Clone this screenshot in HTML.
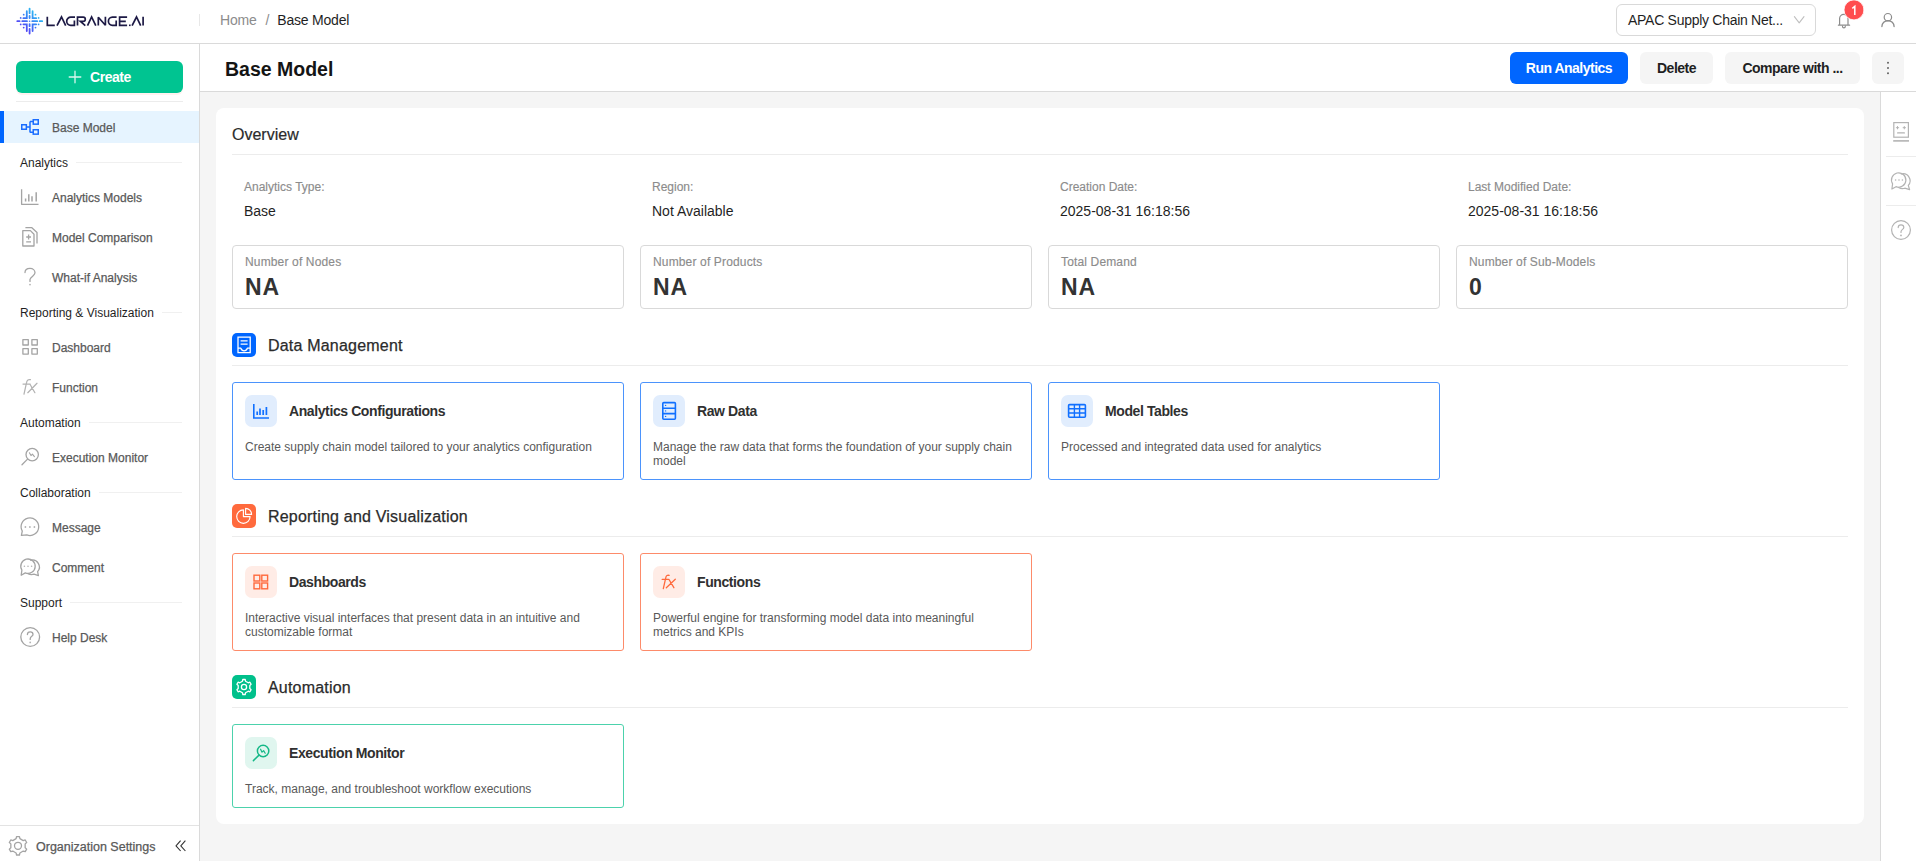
<!DOCTYPE html>
<html>
<head>
<meta charset="utf-8">
<style>
*{box-sizing:border-box;margin:0;padding:0}
html,body{width:1916px;height:861px;overflow:hidden;background:#f5f5f5;font-family:"Liberation Sans",sans-serif;color:#1f1f1f}
.abs{position:absolute}
/* top header */
#top{position:absolute;left:0;top:0;width:1916px;height:44px;background:#fff;border-bottom:1px solid #dadada}
#logo{position:absolute;left:16px;top:7px}
#vdiv{position:absolute;left:199px;top:14px;width:1px;height:12px;background:#e8e8e8}
#crumb{position:absolute;left:220px;top:12px;font-size:14px;line-height:16px;white-space:nowrap;letter-spacing:-0.2px}
#crumb .h{color:#8c8c8c}
#crumb .s{color:#8c8c8c;margin:0 8px 0 9px}
#crumb .c{color:#1f1f1f}
#sel{position:absolute;left:1616px;top:4px;width:200px;height:32px;border:1px solid #d9d9d9;border-radius:6px;background:#fff}
#sel span{position:absolute;left:11px;top:7px;font-size:14px;line-height:16px;color:#1f1f1f;white-space:nowrap;letter-spacing:-0.28px}
#badge{position:absolute;left:1844px;top:0;width:20px;height:20px;border-radius:10px;background:#ff4d4f;color:#fff;font-size:12px;line-height:20px;text-align:center;font-weight:700}
/* sidebar */
#side{position:absolute;left:0;top:44px;width:200px;height:817px;background:#fff;border-right:1px solid #dadada}
#create{position:absolute;left:16px;top:17px;width:167px;height:32px;border-radius:6px;background:#00c491;box-shadow:0 2px 0 rgba(255,38,5,0.06)}
#create .t{position:absolute;left:74px;top:8px;color:#fff;font-size:14px;line-height:16px;font-weight:700;letter-spacing:-0.45px}
#sdiv{position:absolute;left:16px;top:57px;width:167px;height:1px;background:#ececec}
#nav{position:absolute;left:0;top:63px;width:199px;display:flex;flex-direction:column}
.item{position:relative;height:32px;margin:4px 0;display:block}
.item.act{background:#e6f4ff}
.item.act:before{content:"";position:absolute;left:0;top:0;width:4px;height:32px;background:#0066ff}
.item svg{position:absolute;left:20px;top:7px}
.item .t{position:absolute;left:52px;top:10px;font-size:12px;line-height:14px;color:#595959;white-space:nowrap;-webkit-text-stroke:0.25px #595959}
.grp{position:relative;height:30px}
.grp .t{position:absolute;left:20px;top:9px;font-size:12px;line-height:14px;color:#1f1f1f;white-space:nowrap;background:#fff;padding-right:8px;z-index:1}
.grp:after{content:"";position:absolute;left:20px;right:17px;top:15px;height:1px;background:#f0f0f0}
#sbot{position:absolute;left:0;top:781px;width:199px;height:36px;border-top:1px solid #e3e3e3}
#sbot .t{position:absolute;left:36px;top:14px;font-size:12.5px;line-height:14px;color:#595959;white-space:nowrap;-webkit-text-stroke:0.25px #595959}
/* page header */
#ph{position:absolute;left:200px;top:44px;width:1716px;height:48px;background:#fff;border-bottom:1px solid #dadada}
#ph h1{position:absolute;left:25px;top:14px;font-size:19.5px;line-height:22px;font-weight:700;color:#141414;white-space:nowrap}
.btn{position:absolute;top:8px;height:32px;border-radius:6px;background:#f5f5f5;font-size:14px;font-weight:700;line-height:32px;text-align:center;color:#1f1f1f;white-space:nowrap;letter-spacing:-0.5px}
.btn.pri{background:#0066ff;color:#fff}
/* rail */
#rail{position:absolute;left:1880px;top:92px;width:36px;height:769px;background:#fff;border-left:1px solid #dadada}
.rdiv{position:absolute;left:5px;width:31px;height:1px;background:#ececec}
/* content */
#card{position:absolute;left:216px;top:108px;width:1648px;height:716px;background:#fff;border-radius:8px}
.ov{position:absolute;left:16px;top:18px;font-size:16px;line-height:18px;color:#2b2b2b;white-space:nowrap;-webkit-text-stroke:0.2px #2b2b2b}
.hline{position:absolute;left:16px;width:1616px;height:1px;background:#ececec}
.info{position:absolute;top:72px;white-space:nowrap}
.info .l{font-size:12px;line-height:14px;color:#8c8c8c;-webkit-text-stroke:0.15px #8c8c8c}
.info .v{font-size:14px;line-height:16px;color:#1f1f1f;margin-top:9px}
.stat{position:absolute;top:137px;width:392px;height:64px;border:1px solid #d9d9d9;border-radius:4px}
.stat .l{position:absolute;left:12px;top:9px;font-size:12px;line-height:14px;color:#8c8c8c;white-space:nowrap;letter-spacing:0.15px;-webkit-text-stroke:0.15px #8c8c8c}
.stat .v{position:absolute;left:12px;top:28px;font-size:23px;line-height:27px;font-weight:700;color:#333;letter-spacing:1px}
.sec{position:absolute;left:16px;width:1616px;height:33px;border-bottom:1px solid #ececec}
.sec .ic{position:absolute;left:0;top:0;width:24px;height:24px;border-radius:5px}
.sec .t{position:absolute;left:36px;top:4px;font-size:16px;line-height:18px;color:#2b2b2b;white-space:nowrap;letter-spacing:0.2px;-webkit-text-stroke:0.25px #2b2b2b}
.fc{position:absolute;width:392px;border:1px solid #4b93fc;border-radius:3px;background:#fff}
.fc .ib{position:absolute;left:12px;top:12px;width:32px;height:32px;border-radius:7px}
.fc .ib svg{position:absolute;left:8px;top:8px}
.fc .tt{position:absolute;left:56px;top:20px;font-size:14px;line-height:16px;font-weight:700;color:#303030;white-space:nowrap;letter-spacing:-0.4px}
.fc .d{position:absolute;left:12px;top:56.5px;right:12px;font-size:12px;line-height:14px;color:#595959;white-space:nowrap}
.blue{border-color:#4b93fc}
.blue .ib{background:#e1edfd}
.org{border-color:#fd8b6a}
.org .ib{background:#ffece6}
.grn{border-color:#4cd2ac}
.grn .ib{background:#e0f6ef}
</style>
</head>
<body>
<div id="top">
  <svg width="150" height="44" viewBox="0 0 150 44" style="position:absolute;left:0;top:0">
<defs><linearGradient id="lg" x1="18" y1="34" x2="42" y2="9" gradientUnits="userSpaceOnUse"><stop offset="0" stop-color="#6a1cf5"/><stop offset="0.5" stop-color="#3b7bf6"/><stop offset="1" stop-color="#22e6f0"/></linearGradient></defs>
<g stroke="url(#lg)" stroke-width="1.8" fill="none" stroke-linecap="round">
<path d="M29.6 8.6V13.2M29.6 16V18M29.6 24.2V26.2M29.6 29V33.6"/>
<path d="M17.3 21.2H19.6M22.3 21.2H27M32.3 21.2H37.2M39.7 21.2H42.2"/>
<path d="M26.8 11.2V18.2H23.4M32.6 11.2V18.2H36.2M23.4 24.3H26.8V31M36.2 24.3H32.6V31"/>
</g>
<g fill="url(#lg)">
<circle cx="29.6" cy="21.2" r="0.8"/>
<circle cx="23.7" cy="14.7" r="0.9"/><circle cx="35.5" cy="14.7" r="0.9"/>
<circle cx="20.7" cy="17.9" r="0.9"/><circle cx="38.6" cy="17.9" r="0.9"/>
<circle cx="20.7" cy="24.4" r="0.9"/><circle cx="38.6" cy="24.4" r="0.9"/>
<circle cx="23.7" cy="27.6" r="0.9"/><circle cx="35.5" cy="27.6" r="0.9"/>
</g>
<g stroke="#1d1a45" stroke-width="1.7" fill="none" stroke-linejoin="miter" stroke-linecap="butt">
<path d="M47.3 16.8V25.3H54.8"/>
<path d="M57 25.6L61.5 17L65.7 25.6"/>
<path d="M75 17.2H70.8A4.1 4.1 0 0 0 66.7 21.3A4 4 0 0 0 70.7 25.3H74.4V20.6"/>
<path d="M77.5 25.6V17.2H83.2A2.1 2.1 0 0 1 83.2 21.4H80.4L85.3 25.6"/>
<path d="M87.5 25.6L91.6 17L95.8 25.6"/>
<path d="M98.3 25.6V17.2L105.4 25.3V16.8" stroke-linejoin="bevel"/>
<path d="M116.6 17.2H112.4A4.1 4.1 0 0 0 108.4 21.3A4 4 0 0 0 112.4 25.3H116.2V20.6"/>
<path d="M127.1 17.2H119.6V25.3H127.1M119.6 21.3H125.8"/>
<path d="M132.1 25.6L136.5 17L140.7 25.6"/>
<path d="M143.1 16.8V25.6"/>
</g>
<rect x="129" y="24.5" width="1.6" height="1.6" fill="#1d1a45"/>
</svg>
  <div id="vdiv"></div>
  <div id="crumb"><span class="h">Home</span><span class="s">/</span><span class="c">Base Model</span></div>
  <div id="sel"><span>APAC Supply Chain Net...</span></div>
  
</div>

<div id="side">
  <div id="create"><span class="t">Create</span></div>
  <div id="sdiv"></div>
  <div id="nav">
    <div class="item act"><span class="t">Base Model</span></div>
    <div class="grp"><span class="t">Analytics</span></div>
    <div class="item"><span class="t">Analytics Models</span></div>
    <div class="item"><span class="t">Model Comparison</span></div>
    <div class="item"><span class="t">What-if Analysis</span></div>
    <div class="grp"><span class="t">Reporting &amp; Visualization</span></div>
    <div class="item"><span class="t">Dashboard</span></div>
    <div class="item"><span class="t">Function</span></div>
    <div class="grp"><span class="t">Automation</span></div>
    <div class="item"><span class="t">Execution Monitor</span></div>
    <div class="grp"><span class="t">Collaboration</span></div>
    <div class="item"><span class="t">Message</span></div>
    <div class="item"><span class="t">Comment</span></div>
    <div class="grp"><span class="t">Support</span></div>
    <div class="item"><span class="t">Help Desk</span></div>
  </div>
  <div id="sbot"><span class="t">Organization Settings</span></div>
</div>

<div id="ph">
  <h1>Base Model</h1>
  <div class="btn pri" style="left:1310px;width:118px">Run Analytics</div>
  <div class="btn" style="left:1440px;width:73px">Delete</div>
  <div class="btn" style="left:1525px;width:135px">Compare with ...</div>
  <div class="btn" style="left:1672px;width:32px"></div>
</div>

<div id="rail">
  <div class="rdiv" style="top:64px"></div>
  <div class="rdiv" style="top:113px"></div>
</div>

<div id="card">
  <div class="ov">Overview</div>
  <div class="hline" style="top:46px"></div>
  <div class="info" style="left:28px"><div class="l">Analytics Type:</div><div class="v">Base</div></div>
  <div class="info" style="left:436px"><div class="l">Region:</div><div class="v">Not Available</div></div>
  <div class="info" style="left:844px"><div class="l">Creation Date:</div><div class="v">2025-08-31 16:18:56</div></div>
  <div class="info" style="left:1252px"><div class="l">Last Modified Date:</div><div class="v">2025-08-31 16:18:56</div></div>
  <div class="stat" style="left:16px"><div class="l">Number of Nodes</div><div class="v">NA</div></div>
  <div class="stat" style="left:424px"><div class="l">Number of Products</div><div class="v">NA</div></div>
  <div class="stat" style="left:832px"><div class="l">Total Demand</div><div class="v">NA</div></div>
  <div class="stat" style="left:1240px"><div class="l">Number of Sub-Models</div><div class="v">0</div></div>

  <div class="sec" style="top:225px"><div class="ic" style="background:#0066ff"></div><div class="t">Data Management</div></div>
  <div class="fc blue" style="left:16px;top:274px;height:98px"><div class="ib"></div><div class="tt">Analytics Configurations</div><div class="d">Create supply chain model tailored to your analytics configuration</div></div>
  <div class="fc blue" style="left:424px;top:274px;height:98px"><div class="ib"></div><div class="tt">Raw Data</div><div class="d">Manage the raw data that forms the foundation of your supply chain<br>model</div></div>
  <div class="fc blue" style="left:832px;top:274px;height:98px"><div class="ib"></div><div class="tt">Model Tables</div><div class="d">Processed and integrated data used for analytics</div></div>

  <div class="sec" style="top:396px"><div class="ic" style="background:#ff6a3d"></div><div class="t">Reporting and Visualization</div></div>
  <div class="fc org" style="left:16px;top:445px;height:98px"><div class="ib"></div><div class="tt">Dashboards</div><div class="d">Interactive visual interfaces that present data in an intuitive and<br>customizable format</div></div>
  <div class="fc org" style="left:424px;top:445px;height:98px"><div class="ib"></div><div class="tt">Functions</div><div class="d">Powerful engine for transforming model data into meaningful<br>metrics and KPIs</div></div>

  <div class="sec" style="top:567px"><div class="ic" style="background:#00c08b"></div><div class="t">Automation</div></div>
  <div class="fc grn" style="left:16px;top:616px;height:84px"><div class="ib"></div><div class="tt">Execution Monitor</div><div class="d">Track, manage, and troubleshoot workflow executions</div></div>
</div>
<svg id="ov" width="1916" height="861" viewBox="0 0 1916 861" style="position:absolute;left:0;top:0;z-index:5;pointer-events:none">
<g fill="none" stroke-linecap="round" stroke-linejoin="round">
<!-- create plus -->
<path d="M75 71.2V82.8M69.2 77H80.8" stroke="#fff" stroke-opacity="0.85" stroke-width="1.3"/>
<!-- base model icon -->
<g stroke="#1a6dff" stroke-width="1.5" stroke-linecap="butt" stroke-linejoin="miter">
<rect x="21.75" y="124.75" width="4.6" height="4.5"/>
<rect x="33.25" y="119.75" width="5" height="4.4"/>
<rect x="33.25" y="129.75" width="5" height="4.4"/>
<path d="M26.3 127H30M30 121.4V132.6M30 121.6H33.3M30 132.2H33.3"/>
</g>
<g stroke="#a4a4a4" stroke-width="1.3">
<!-- analytics models -->
<path d="M21.6 189.2V204.3H38.5" stroke-linecap="butt"/>
<path d="M25.6 198.6V201.4M28.8 194.2V201.4M32 196.2V201.4M36.2 192.2V201.4" stroke-linecap="butt" stroke-width="1.5"/>
<!-- model comparison -->
<path d="M22.8 230.6H30.4L34 234.3V246H22.8Z"/>
<path d="M25.4 227.6H31.6L37 232.6V243.6" stroke-linecap="butt"/>
<path d="M28.6 234.6V239.4M26.2 237H31M26.2 241.8H31" stroke-linecap="butt"/>
<!-- what-if ? -->
<path d="M25 272.6C25 270 27.2 268.4 30 268.4C32.9 268.4 35 270.3 35 272.8C35 275.6 31 276.4 30 279.4V281.4"/>
<!-- dashboard -->
<rect x="22.9" y="339.6" width="5.4" height="5.4"/>
<rect x="31.9" y="339.6" width="5.4" height="5.4"/>
<rect x="22.9" y="348.7" width="5.4" height="5.4"/>
<rect x="31.9" y="348.7" width="5.4" height="5.4"/>
<!-- exec monitor -->
<circle cx="32.2" cy="454.6" r="6.2"/>
<path d="M27.3 459.4L22 464.8"/>
<path d="M29.4 452.8L31 455.6L32.4 454.2L34.4 456.6" stroke-width="1.1"/>
<!-- message -->
<path d="M21.40 535.40L22.28 531.10A8.8 8.8 0 1 1 26.89 534.97Z"/>
<!-- comment -->
<path d="M21.20 575.20L21.89 570.02A7.2 7.2 0 1 1 25.30 572.88Z"/>
<path d="M30.6 560.2A7 7 0 0 1 37.6 571.6L38.4 575.6L34 574.2C32 574.8 29.8 574.6 27.9 573.6"/>
<!-- help desk -->
<circle cx="30.2" cy="637" r="9.4"/>
<path d="M27.4 634.6C27.4 632.8 28.6 631.8 30.2 631.8C31.8 631.8 33 632.8 33 634.4C33 636.2 30.2 636.6 30.2 638.8V639.4"/>
<!-- gear bottom -->
<path d="M16.08 838.65 L16.55 836.61 L19.45 836.61 L19.92 838.65 L23.23 840.57 L25.23 839.95 L26.68 842.47 L25.15 843.88 L25.15 847.72 L26.68 849.13 L25.23 851.65 L23.23 851.03 L19.92 852.95 L19.45 854.99 L16.55 854.99 L16.08 852.95 L12.77 851.03 L10.77 851.65 L9.32 849.13 L10.85 847.72 L10.85 843.88 L9.32 842.47 L10.77 839.95 L12.77 840.57Z"/>
<circle cx="18" cy="845.8" r="3.5"/>
</g>
<g fill="#b3b3b3">
<circle cx="25.4" cy="527" r="0.9"/><circle cx="29.9" cy="527" r="0.9"/><circle cx="34.4" cy="527" r="0.9"/>
<circle cx="24.4" cy="566.2" r="0.8"/><circle cx="28" cy="566.2" r="0.8"/><circle cx="31.6" cy="566.2" r="0.8"/>
<circle cx="30.2" cy="642.4" r="0.9"/><circle cx="30" cy="284.6" r="0.9"/>
</g>
<!-- fx sidebar -->
<path d="M30.4 379.7C28.4 379.1 27 380 26.6 382.4L24 394.2M23 384.1H30.2M30 384.2L34.9 392.7M37 383.3L27.8 392.7" stroke="#b3b3b3" stroke-width="1.25" stroke-linecap="round"/>
<!-- collapse << -->
<path d="M180.6 840.6L176 845.8L180.6 851M185.4 840.6L180.8 845.8L185.4 851" stroke="#333" stroke-width="1.1" stroke-linecap="butt"/>
<!-- select chevron -->
<path d="M1794.4 16.6L1799.2 22.8L1804 16.6" stroke="#bfbfbf" stroke-width="1.1"/>
<!-- bell -->
<path d="M1838.4 25.2H1849.6M1839.6 25.2V18.6A4.2 4.2 0 0 1 1848 18.6V25.2M1842.5 26.4A1.4 1.4 0 0 0 1845.3 26.4" stroke="#8c8c8c" stroke-width="1.2"/>
<circle cx="1854" cy="9.9" r="10" fill="#ff4d4f" stroke="#fff" stroke-width="0.8"/>
<!-- user -->
<circle cx="1887.9" cy="17.2" r="3.7" stroke="#8c8c8c" stroke-width="1.2"/>
<path d="M1881.9 26.6A6.1 6.1 0 0 1 1894.1 26.6" stroke="#8c8c8c" stroke-width="1.3"/>
<!-- rail icons -->
<g stroke="#b3b3b3" stroke-width="1.2">
<rect x="1893.8" y="122.6" width="14.6" height="14.6" stroke-linejoin="miter"/>
<path d="M1897.6 132.9H1904.4"/>
<path d="M1897.5 126.5V128.9M1896.3 127.7H1898.7M1904.3 126.5V128.9M1903.1 127.7H1905.5" stroke-width="1"/>
<path d="M1893.2 140.9H1909" stroke-width="1.6" stroke-linecap="butt"/>
<path d="M1891.90 189.00L1892.59 183.82A7.2 7.2 0 1 1 1896.00 186.68Z"/>
<path d="M1901.3 174A7 7 0 0 1 1908.3 185.4L1909.6 189.6L1904.8 188.2C1902.8 188.8 1900.6 188.6 1898.6 187.4"/>
<circle cx="1901" cy="230" r="9.4"/>
<path d="M1898.2 227.6C1898.2 225.8 1899.4 224.8 1901 224.8C1902.6 224.8 1903.8 225.8 1903.8 227.4C1903.8 229.2 1901 229.6 1901 231.8V232.4"/>
</g>
<g fill="#b3b3b3">
<circle cx="1895.6" cy="180" r="0.8"/><circle cx="1899" cy="180" r="0.8"/><circle cx="1902.4" cy="180" r="0.8"/>
<circle cx="1901" cy="235.4" r="0.9"/>
</g>
<path d="M1852.3 8.4L1854.8 6.4V15" stroke="#fff" stroke-width="1.5" stroke-linecap="butt" stroke-linejoin="miter"/>
<!-- more dots -->
<g fill="#595959"><circle cx="1888" cy="62.8" r="0.95"/><circle cx="1888" cy="68" r="0.95"/><circle cx="1888" cy="73.2" r="0.95"/></g>
<!-- section icons -->
<g stroke="#fff" stroke-width="1.3">
<!-- data mgmt doc -->
<path d="M238 352.6V337.2H250.2V352.6Z" stroke-linejoin="miter"/>
<path d="M240.6 340.8H247.6M240.6 344.2H247.6" stroke-linecap="butt"/>
<path d="M238 348.2H240.8C241.4 350 242.6 350.8 244.1 350.8C245.6 350.8 246.8 350 247.4 348.2H250.2" stroke-linecap="butt"/>
<!-- pie -->
<path d="M243.4 509.9A6.7 6.7 0 1 0 250.1 516.6H243.4Z" stroke-width="1.15"/>
<path d="M245.6 508.4V514.4H251.6A6 6 0 0 0 245.6 508.4Z" stroke-width="1.15"/>
<!-- gear automation -->
<path d="M242.45 681.20 L242.81 679.49 L245.19 679.49 L245.55 681.20 L248.24 682.76 L249.91 682.22 L251.10 684.28 L249.80 685.45 L249.80 688.55 L251.10 689.72 L249.91 691.78 L248.24 691.24 L245.55 692.80 L245.19 694.51 L242.81 694.51 L242.45 692.80 L239.76 691.24 L238.09 691.78 L236.90 689.72 L238.20 688.55 L238.20 685.45 L236.90 684.28 L238.09 682.22 L239.76 682.76Z"/>
<circle cx="244" cy="687" r="2.6"/>
</g>
<!-- card icons blue -->
<g stroke="#1170ff" stroke-width="1.6" stroke-linecap="butt" stroke-linejoin="miter">
<path d="M253.8 404V418H269"/>
<path d="M257.2 411.6V415M260 408.6V415M263.2 410V415M266.4 407V415" stroke-width="1.7"/>
<rect x="662.8" y="402.6" width="12.6" height="16.6" rx="1"/>
<path d="M662.8 408.2H675.4M662.8 413.6H675.4"/>
<rect x="1068.6" y="404.6" width="16.8" height="12.6" rx="1"/>
<path d="M1068.6 408.8H1085.4M1068.6 413H1085.4M1074.4 404.6V417.2M1079.6 404.6V417.2" stroke-width="1.4"/>
</g>
<g fill="#1170ff"><circle cx="665.6" cy="405.4" r="0.7"/><circle cx="665.6" cy="410.9" r="0.7"/><circle cx="665.6" cy="416.4" r="0.7"/></g>
<!-- card icons orange -->
<g stroke="#ff6a3d" stroke-width="1.4" stroke-linejoin="miter">
<rect x="254" y="575.2" width="5.8" height="5.8"/>
<rect x="261.8" y="575.2" width="5.8" height="5.8"/>
<rect x="254" y="583" width="5.8" height="5.8"/>
<rect x="261.8" y="583" width="5.8" height="5.8"/>
</g>
<path d="M669.2 575.4C667.4 574.9 666.2 575.6 665.8 577.6L663.3 588.6M662.2 579.4H668.6M669 579.5L673.9 587.7M675.3 579.3L666.3 587.7" stroke="#ff6a3d" stroke-width="1.3" stroke-linecap="round"/>
<!-- card icon green -->
<g stroke="#14b887" stroke-width="1.5">
<circle cx="263.1" cy="751" r="5.7"/>
<path d="M259 755.1L253.4 760.6"/>
<path d="M260.6 749.2L262 752.2L263.6 750.6L265.2 753.2" stroke-width="1.2"/>
</g>
</g>
</svg>
</body>
</html>
